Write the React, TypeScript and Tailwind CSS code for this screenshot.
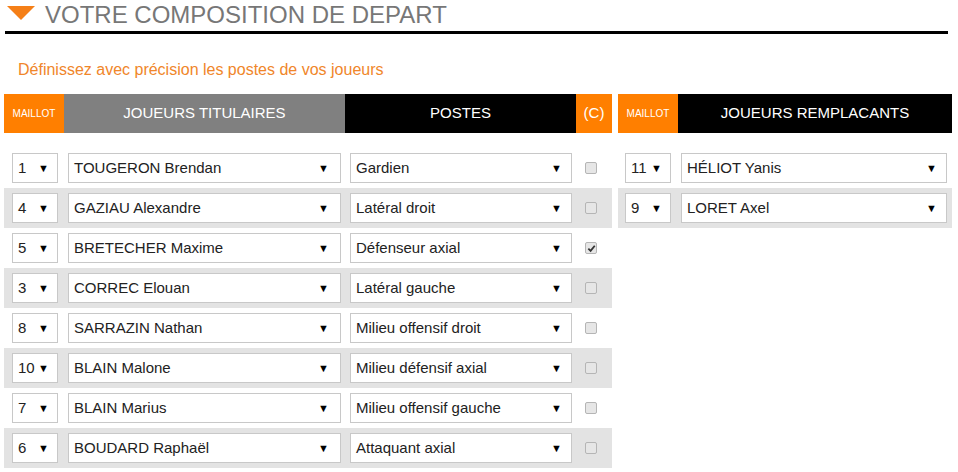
import { useState } from 'react';

type Titulaire = {
  maillot: string;
  nom: string;
  poste: string;
  capitaine: boolean;
};

const titulaires: Titulaire[] = [
  { maillot: '1', nom: 'TOUGERON Brendan', poste: 'Gardien', capitaine: false },
  { maillot: '4', nom: 'GAZIAU Alexandre', poste: 'Latéral droit', capitaine: false },
  { maillot: '5', nom: 'BRETECHER Maxime', poste: 'Défenseur axial', capitaine: true },
  { maillot: '3', nom: 'CORREC Elouan', poste: 'Latéral gauche', capitaine: false },
  { maillot: '8', nom: 'SARRAZIN Nathan', poste: 'Milieu offensif droit', capitaine: false },
  { maillot: '10', nom: 'BLAIN Malone', poste: 'Milieu défensif axial', capitaine: false },
  { maillot: '7', nom: 'BLAIN Marius', poste: 'Milieu offensif gauche', capitaine: false },
  { maillot: '6', nom: 'BOUDARD Raphaël', poste: 'Attaquant axial', capitaine: false },
];

const remplacants = [
  { maillot: '11', nom: 'HÉLIOT Yanis' },
  { maillot: '9', nom: 'LORET Axel' },
];

function FakeSelect({ value, className }: { value: string; className: string }) {
  return (
    <div className={`h-[30px] flex items-center justify-between gap-[3px] bg-white border border-[#c8c8c8] pl-[5px] text-[15px] text-[#222] ${className}`}>
      <span className="whitespace-nowrap">{value}</span>
      <span className="text-[11px] leading-none text-black">▼</span>
    </div>
  );
}

function Checkbox({ checked }: { checked: boolean }) {
  return (
    <div className="w-[12px] h-[12px] rounded-[2px] border border-[#b5b5b5] bg-[#e6e6e6] flex items-center justify-center">
      {checked && (
        <svg width="9" height="9" viewBox="0 0 10 10">
          <path d="M1.5 5.2 L4 7.6 L8.6 2" fill="none" stroke="#333" strokeWidth="2" />
        </svg>
      )}
    </div>
  );
}

export default function App() {
  const [rows] = useState(titulaires);

  return (
    <div className="w-[958px] h-[472px] bg-white overflow-hidden font-['Liberation_Sans',Arial,sans-serif]">
      <div className="ml-[5px] mr-[10px] h-[34px] border-b-[3px] border-black flex items-start pt-[1px]">
        <svg width="28" height="14" viewBox="0 0 28 14" className="mt-[5px] ml-[2px]">
          <polygon points="0,0 28,0 14,14" fill="#f57f17" />
        </svg>
        <span className="ml-[10px] text-[24px] leading-[28px] text-[#777]">VOTRE COMPOSITION DE DEPART</span>
      </div>

      <div className="pl-[18px] pt-[24px] h-[60px] text-[16px] text-[#f0862a]">
        Définissez avec précision les postes de vos joueurs
      </div>

      <div className="flex pl-[4px] gap-[5px]">
        <div className="w-[608px]">
          <div className="flex h-[39px] text-white">
            <div className="w-[60px] bg-[#ff7f00] flex items-center justify-center text-[10px]">MAILLOT</div>
            <div className="w-[281px] bg-[#808080] flex items-center justify-center text-[15px]">JOUEURS TITULAIRES</div>
            <div className="w-[231px] bg-black flex items-center justify-center text-[15px]">POSTES</div>
            <div className="w-[36px] bg-[#ff7f00] flex items-center justify-center text-[15px]">(C)</div>
          </div>
          <div className="mt-[15px]">
            {rows.map((r, i) => (
              <div key={r.nom} className={`flex items-center h-[40px] ${i % 2 === 1 ? 'bg-[#e3e3e3]' : ''}`}>
                <FakeSelect value={r.maillot} className="ml-[8px] w-[46px] pr-[8px]" />
                <FakeSelect value={r.nom} className="ml-[10px] w-[273px] pr-[11px]" />
                <FakeSelect value={r.poste} className="ml-[9px] w-[222px] pr-[9px]" />
                <div className="ml-[13px]">
                  <Checkbox checked={r.capitaine} />
                </div>
              </div>
            ))}
          </div>
        </div>

        <div className="w-[334px] ml-[1px]">
          <div className="flex h-[39px] text-white">
            <div className="w-[60px] bg-[#ff7f00] flex items-center justify-center text-[10px]">MAILLOT</div>
            <div className="flex-1 bg-black flex items-center justify-center text-[15px]">JOUEURS REMPLACANTS</div>
          </div>
          <div className="mt-[15px]">
            {remplacants.map((r, i) => (
              <div key={r.nom} className={`flex items-center h-[40px] ${i % 2 === 1 ? 'bg-[#e3e3e3]' : ''}`}>
                <FakeSelect value={r.maillot} className="ml-[7px] w-[46px] pr-[8px]" />
                <FakeSelect value={r.nom} className="ml-[10px] w-[266px] pr-[9px]" />
              </div>
            ))}
          </div>
        </div>
      </div>
    </div>
  );
}
